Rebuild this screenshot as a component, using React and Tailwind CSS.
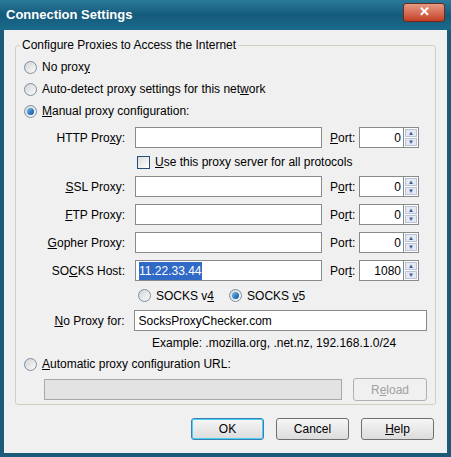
import React from 'react';

const Radio = ({ checked }) => (
  <span className="w-[13px] h-[13px] rounded-full border border-[#7a8fa3] bg-gradient-to-br from-[#d5d5d5] to-[#fafafa] flex items-center justify-center shrink-0">
    {checked && <span className="w-[7px] h-[7px] rounded-full bg-gradient-to-br from-[#6fc1f0] to-[#0a4a9c]" />}
  </span>
);

const Spin = ({ value }) => (
  <div className="flex h-[21px]">
    <div className="w-[45px] border border-[#8a8a8a] bg-white flex items-center justify-end pr-[2px]">{value}</div>
    <div className="w-[15px] flex flex-col border-y border-r border-[#8a8a8a] bg-white">
      <div className="flex-1 m-[1px] mb-0 bg-[#e4e8f0] border border-[#b7c3d6] flex items-center justify-center text-[6px] text-[#3a55a0] leading-none">▲</div>
      <div className="flex-1 m-[1px] bg-[#e4e8f0] border border-[#b7c3d6] flex items-center justify-center text-[6px] text-[#3a55a0] leading-none">▼</div>
    </div>
  </div>
);

const Row = ({ pre, u, post, value, sel, port, portU }) => (
  <div className="flex items-center h-[21px]">
    <div className="w-[111px] text-right pr-[10px]">
      {pre}<span className="underline">{u}</span>{post}
    </div>
    <div className="w-[187px] h-[21px] border border-[#8a8a8a] bg-white flex items-center px-[3px]">
      {sel ? <span className="bg-[#3169c6] text-white">{value}</span> : value}
    </div>
    <div className="w-[37px] pl-[8px]">{portU}</div>
    <Spin value={port} />
  </div>
);

const Btn = ({ children, def }) => (
  <div className={`w-[73px] h-[22px] rounded-[3px] border ${def ? 'border-[#3c7fb1] shadow-[inset_0_0_0_1px_#48d0f5]' : 'border-[#707070]'} bg-gradient-to-b from-[#f6f6f6] to-[#dcdcdc] flex items-center justify-center`}>
    {children}
  </div>
);

export default function App() {
  return (
    <div className="w-[451px] h-[457px] bg-[#1d5a78] p-[4px] pt-0 text-[12px] text-black" style={{ fontFamily: '"Liberation Sans", Arial, sans-serif' }}>
      <div className="h-[30px] -mx-[4px] px-[6px] flex items-center justify-between bg-gradient-to-b from-[#2b7a9a] via-[#155b7c] to-[#1a6a8c]">
        <span className="text-white font-bold text-[13px]">Connection Settings</span>
        <div className="w-[42px] h-[19px] rounded-[3px] border border-[#6b2a1e] bg-gradient-to-b from-[#e59a84] to-[#c43d22] flex items-center justify-center text-white font-bold text-[13px] mb-[6px]">✕</div>
      </div>
      <div className="bg-[#f0f0f0] h-[423px] px-[11px] pt-[15px]">
        <div className="relative border border-[#d0d0bf] rounded-[3px] h-[360px] px-[8px] pt-[10px]">
          <span className="absolute -top-[8px] left-[4px] bg-[#f0f0f0] px-[2px] leading-[15px]">Configure Proxies to Access the Internet</span>
          <div className="flex flex-col">
            <div className="flex items-center gap-[5px] h-[22px]"><Radio /><span>No prox<span className="underline">y</span></span></div>
            <div className="flex items-center gap-[5px] h-[22px]"><Radio /><span>Auto-detect proxy settings for this net<span className="underline">w</span>ork</span></div>
            <div className="flex items-center gap-[5px] h-[22px]"><Radio checked /><span><span className="underline">M</span>anual proxy configuration:</span></div>
          </div>
          <div className="flex flex-col mt-[5px]">
            <Row pre="HTTP Pro" u="x" post="y:" value="" port="0" portU={<><span className="underline">P</span>ort:</>} />
            <div className="flex items-center gap-[5px] h-[28px] pl-[113px]">
              <span className="w-[13px] h-[13px] border border-[#1c5180] bg-gradient-to-br from-[#dcdcd7] to-white" />
              <span><span className="underline">U</span>se this proxy server for all protocols</span>
            </div>
            <div className="flex flex-col gap-[7px]">
              <Row pre="" u="S" post="SL Proxy:" value="" port="0" portU={<>P<span className="underline">o</span>rt:</>} />
              <Row pre="" u="F" post="TP Proxy:" value="" port="0" portU={<>Po<span className="underline">r</span>t:</>} />
              <Row pre="" u="G" post="opher Proxy:" value="" port="0" portU={<>Port:</>} />
              <Row pre="SO" u="C" post="KS Host:" value="11.22.33.44" sel port="1080" portU={<>Por<span className="underline">t</span>:</>} />
            </div>
            <div className="flex items-center h-[29px] pl-[114px] gap-[5px]">
              <Radio /><span className="mr-[10px]">SOCKS v<span className="underline">4</span></span>
              <Radio checked /><span>SOCKS <span className="underline">v</span>5</span>
            </div>
            <div className="flex items-center h-[21px]">
              <div className="w-[111px] text-right pr-[10px]"><span className="underline">N</span>o Proxy for:</div>
              <div className="w-[294px] h-[21px] border border-[#8a8a8a] bg-white flex items-center px-[3px]">SocksProxyChecker.com</div>
            </div>
            <div className="pl-[128px] h-[24px] flex items-center">Example: .mozilla.org, .net.nz, 192.168.1.0/24</div>
            <div className="flex items-center gap-[5px] h-[18px]"><Radio /><span><span className="underline">A</span>utomatic proxy configuration URL:</span></div>
            <div className="flex items-center mt-[5px] pl-[20px] gap-[11px]">
              <div className="w-[298px] h-[21px] border border-[#a8a8a8] bg-[#e3e3e3]" />
              <div className="w-[74px] h-[23px] rounded-[3px] border border-[#adb2b5] flex items-center justify-center text-[#a0a0a0]">R<span className="underline">e</span>load</div>
            </div>
          </div>
        </div>
        <div className="flex justify-end gap-[12px] mt-[13px] pr-[2px]">
          <Btn def>OK</Btn>
          <Btn>Cancel</Btn>
          <Btn><span><span className="underline">H</span>elp</span></Btn>
        </div>
      </div>
    </div>
  );
}
